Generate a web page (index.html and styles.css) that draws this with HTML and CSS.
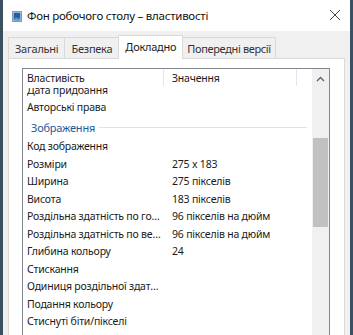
FILE: index.html
```html
<!DOCTYPE html>
<html lang="uk">
<head>
<meta charset="utf-8">
<link rel="stylesheet" href="styles.css">
</head>
<body>
<div class="window">
  <div class="titlebar">
    <svg class="app-icon" width="10" height="11" viewBox="0 0 10 11">
      <rect x="0.5" y="0.5" width="9" height="10" fill="#ffffff" stroke="#8a99a8"/>
      <rect x="1.5" y="1.5" width="7" height="8" fill="#1f5fa8"/>
      <path d="M1.5 9.5 L4 6 L6 8 L7.5 6.5 L8.5 9.5 Z" fill="#5a9ad6"/>
    </svg>
    <span class="title">Фон робочого столу – властивості</span>
    <svg class="close" width="12" height="12" viewBox="0 0 12 12">
      <path d="M1 1 L11 11 M11 1 L1 11" stroke="#444" stroke-width="1" fill="none"/>
    </svg>
  </div>
  <div class="tabs">
    <div class="tab">Загальні</div>
    <div class="tab">Безпека</div>
    <div class="tab active">Докладно</div>
    <div class="tab last">Попередні версії</div>
  </div>
  <div class="panel">
    <div class="listbox">
      <div class="list">
        <div class="header">
          <div class="hcol name">Властивість</div>
          <div class="hcol value">Значення</div>
          <div class="hcol rest"></div>
        </div>
        <div class="rows-clip">
          <div class="rows">
            <div class="row"><span class="name">Дата придбання</span><span class="value"></span></div>
            <div class="row"><span class="name">Авторські права</span><span class="value"></span></div>
            <div class="group"><span class="group-label">Зображення</span><span class="group-line"></span></div>
            <div class="row"><span class="name">Код зображення</span><span class="value"></span></div>
            <div class="row"><span class="name">Розміри</span><span class="value">275 x 183</span></div>
            <div class="row"><span class="name">Ширина</span><span class="value">275 пікселів</span></div>
            <div class="row"><span class="name">Висота</span><span class="value">183 пікселів</span></div>
            <div class="row"><span class="name">Роздільна здатність по горизонталі</span><span class="value">96 пікселів на дюйм</span></div>
            <div class="row"><span class="name">Роздільна здатність по вертикалі</span><span class="value">96 пікселів на дюйм</span></div>
            <div class="row"><span class="name">Глибина кольору</span><span class="value">24</span></div>
            <div class="row"><span class="name">Стискання</span><span class="value"></span></div>
            <div class="row"><span class="name">Одиниця роздільної здатності</span><span class="value"></span></div>
            <div class="row"><span class="name">Подання кольору</span><span class="value"></span></div>
            <div class="row"><span class="name">Стиснуті біти/пікселі</span><span class="value"></span></div>
            <div class="row"><span class="name">Камера</span><span class="value"></span></div>
          </div>
        </div>
      </div>
      <div class="scrollbar">
        <div class="arrow">
          <svg width="9" height="6" viewBox="0 0 9 6"><path d="M1 5 L4.5 1.5 L8 5" stroke="#606060" stroke-width="1.3" fill="none"/></svg>
        </div>
        <div class="thumb"></div>
      </div>
    </div>
  </div>
</div>
</body>
</html>
```
FILE: styles.css
```css
* { box-sizing: border-box; }
html, body { margin: 0; padding: 0; }
body {
  width: 353px;
  height: 335px;
  overflow: hidden;
  font-family: "Noto Sans", "Open Sans", sans-serif;
  font-size: 10.5px;
  letter-spacing: -0.2px;
  color: #1a1a1a;
  background: #f0f0f0;
}
.window {
  width: 353px;
  height: 335px;
  border-left: 3px solid #3b5060;
  border-right: 3px solid #3b5060;
  background: #f0f0f0;
  display: flex;
  flex-direction: column;
}
.titlebar {
  height: 31px;
  flex: none;
  background: #ffffff;
  display: flex;
  align-items: center;
  padding-left: 9px;
  padding-right: 9px;
}
.app-icon { flex: none; margin-right: 5px; margin-top: 1px; }
.title {
  font-size: 11.5px;
  letter-spacing: -0.25px;
  color: #111;
  flex: 1;
}
.close { flex: none; margin-bottom: 1px; }
.tabs {
  display: flex;
  align-items: flex-end;
  padding-left: 5px;
  margin-top: 3px;
  height: 24px;
  flex: none;
  position: relative;
  z-index: 1;
}
.tab {
  height: 21px;
  padding: 0 6px;
  display: flex;
  align-items: center;
  border: 1px solid #d9d9d9;
  border-bottom: none;
  border-right: none;
  background: #f0f0f0;
  font-size: 11px;
  letter-spacing: -0.25px;
  color: #333;
}
.tab.last { border-right: 1px solid #d9d9d9; padding: 0 4px; letter-spacing: -0.35px; }
.tab.active {
  height: 24px;
  background: #ffffff;
  margin-bottom: -1px;
  padding-bottom: 3px;
  border-right: 1px solid #d9d9d9;
  color: #1a1a1a;
}
.tab.active + .tab { border-left: none; }
.panel {
  flex: 1;
  margin: 0 5px 0 5px;
  background: #ffffff;
  border: 1px solid #d9d9d9;
  border-bottom: none;
  padding: 9px 14px 0 13px;
  min-height: 0;
}
.listbox {
  height: 100%;
  border: 1px solid #828790;
  border-bottom: none;
  display: flex;
  background: #ffffff;
}
.list {
  flex: 1;
  display: flex;
  flex-direction: column;
  min-width: 0;
}
.header {
  height: 19px;
  display: flex;
  flex: none;
  background: #ffffff;
}
.hcol {
  display: flex;
  align-items: center;
  height: 17px;
}
.hcol.name { width: 141px; padding-left: 4px; border-right: 1px solid #e5e5e5; }
.hcol.value { width: 133px; padding-left: 8px; border-right: 1px solid #e5e5e5; }
.hcol.rest { flex: 1; }
.rows-clip { flex: 1; overflow: hidden; }
.rows { margin-top: -7.25px; }
.row {
  height: 17.5px;
  display: flex;
  align-items: center;
}
.row .name {
  width: 141px;
  flex: none;
  padding-left: 4px;
  padding-right: 3px;
  white-space: nowrap;
  overflow: hidden;
  text-overflow: ellipsis;
}
.row .value {
  padding-left: 8px;
  white-space: nowrap;
}
.group {
  height: 21.5px;
  display: flex;
  align-items: center;
  padding-top: 1px;
  padding-left: 8px;
  padding-right: 5px;
}
.group-label {
  color: #1e5a9e;
  font-size: 11px;
  flex: none;
}
.group-line {
  flex: 1;
  height: 1px;
  margin-left: 4px;
  background: #dde4ea;
}
.scrollbar {
  width: 17px;
  flex: none;
  background: #f0f0f0;
  display: flex;
  flex-direction: column;
  align-items: center;
}
.arrow {
  height: 17px;
  width: 17px;
  display: flex;
  align-items: center;
  justify-content: center;
  margin-top: 1px;
}
.thumb {
  width: 15px;
  height: 89px;
  margin-top: 51px;
  background: #c1c1c1;
}
```
